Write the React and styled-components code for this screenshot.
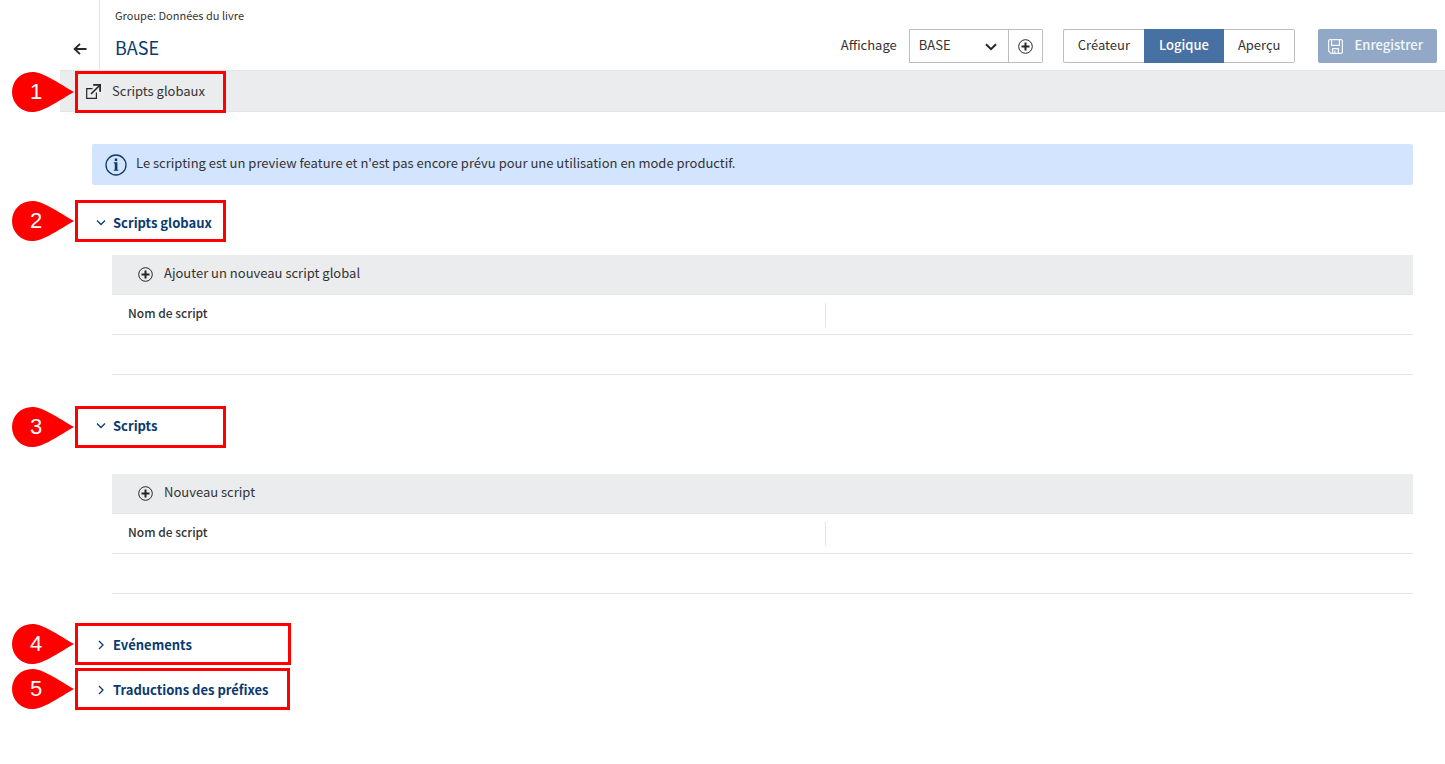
import {useState} from 'react';

import styled, {createGlobalStyle} from 'styled-components';

const GlobalStyle = createGlobalStyle`
  * {
    box-sizing: border-box;
  }

  body {
    margin: 0;
    background: #ffffff;
    color: #333333;
    font-family: "Noto Sans CJK SC", "Noto Sans", sans-serif;
    font-size: 13px;
    line-height: 20px;
  }

  button, select {
    font: inherit;
    color: inherit;
  }

  svg {
    display: block;
    flex: none;
  }
`;

const Page = styled.div`
  padding-left: 60px;
`;

const Header = styled.header`
  display: flex;
  align-items: stretch;
  height: 70px;
  padding-right: 8px;
`;

const BackButton = styled.button`
  display: flex;
  align-items: flex-end;
  justify-content: center;
  width: 40px;
  padding: 0 0 14px;
  border: 0;
  border-right: 1px solid #e4e5e6;
  background: none;
`;

const Heading = styled.div`
  flex: 1;
  padding: 5px 15px 0;
`;

const Group = styled.div`
  font-size: 11px;
`;

const Title = styled.h1`
  margin: 8px 0 0;
  color: #0a3a6e;
  font-size: 18px;
  font-weight: 400;
  line-height: 28px;
`;

const Actions = styled.div`
  display: flex;
  align-items: flex-start;
  padding-top: 29px;
`;

const ViewLabel = styled.label`
  padding: 6px 12px 0 0;
`;

const SelectBox = styled.div`
  display: grid;
  align-items: center;
  width: 100px;
  height: 34px;
  border: 1px solid #bdbdbd;

  > * {
    grid-area: 1 / 1;
  }

  > svg {
    justify-self: end;
    margin: 2px 11px 0 0;
    pointer-events: none;
  }
`;

const Select = styled.select`
  width: 100%;
  height: 32px;
  padding: 0 30px 2px 9px;
  border: 0;
  background: none;
  appearance: none;
`;

const AddView = styled.button`
  display: flex;
  align-items: center;
  justify-content: center;
  width: 34px;
  height: 34px;
  padding: 0;
  border: 1px solid #bdbdbd;
  border-left: 0;
  border-radius: 0 2px 2px 0;
  background: none;
`;

const ModeSwitch = styled.div`
  display: flex;
  margin: 0 23px 0 20px;
`;

const Mode = styled.button`
  height: 34px;
  padding: 0 14px 2px;
  border: 1px solid ${props => props.$active ? '#4771a3' : '#bdbdbd'};
  background: ${props => props.$active ? '#4771a3' : '#ffffff'};
  color: ${props => props.$active ? '#ffffff' : '#333333'};
  font-weight: ${props => props.$active ? 500 : 400};

  &:first-child {
    border-right: 0;
    border-radius: 2px 0 0 2px;
  }

  &:last-child {
    border-left: 0;
    border-radius: 0 2px 2px 0;
  }
`;

const SaveButton = styled.button`
  display: flex;
  align-items: center;
  gap: 11px;
  height: 34px;
  padding: 0 14px 0 10px;
  border: 0;
  border-radius: 2px;
  background: #91a9c7;
  color: #f4f7fa;
  font-weight: 500;
`;

const Toolbar = styled.div`
  position: relative;
  height: 42px;
  border: 1px solid #e4e5e6;
  border-width: 1px 0;
  background: #ebecee;
`;

const ToolbarButton = styled.button`
  display: flex;
  align-items: center;
  gap: 11px;
  height: 40px;
  padding: 0 20px 0 26px;
  border: 0;
  background: none;
`;

const Content = styled.main`
  padding: 32px 32px 54px;
`;

const Notice = styled.div`
  display: flex;
  align-items: center;
  gap: 9px;
  height: 41px;
  margin-bottom: 18px;
  padding: 0 13px;
  border-radius: 2px;
  background: #d3e5fe;
`;

// lifts the text a little above the middle of the icon beside it
const RaisedText = styled.span`
  padding-bottom: 3px;
`;

const SectionBlock = styled.section`
  margin-bottom: ${props => props.$open ? 31 : 5}px;
`;

const SectionTitle = styled.h2`
  position: relative;
  margin: 0;
  font-size: 13px;
  line-height: 20px;
`;

const SectionToggle = styled.button`
  display: flex;
  align-items: center;
  gap: 7px;
  height: 40px;
  padding: 0 4px;
  border: 0;
  background: none;
  color: #0a3a6e;
  font-weight: 700;
`;

const Panel = styled.div`
  margin: ${props => props.$gap}px 0 0 20px;
`;

const PanelBar = styled.div`
  display: flex;
  height: 40px;
  border-bottom: 1px solid #e4e5e6;
  background: #ebecee;
`;

const AddButton = styled.button`
  display: flex;
  align-items: center;
  gap: 11px;
  padding: 0 26px;
  border: 0;
  background: none;
`;

const Table = styled.table`
  width: 100%;
  border-collapse: separate;
  border-spacing: 0;
  table-layout: fixed;
  font-size: 12px;

  th, td {
    height: 40px;
    padding: 0 0 0 16px;
    border-bottom: 1px solid #e4e5e6;
    font-weight: 500;
    text-align: left;
  }

  th:first-child {
    width: 54.8%;
    padding-bottom: 3px;
  }

  th:last-child {
    padding: 0;
  }
`;

const ColumnDivider = styled.div`
  height: 24px;
  border-left: 1px solid #e4e5e6;
`;

const Frame = styled.div`
  position: absolute;
  top: ${props => props.$top}px;
  left: ${props => props.$left}px;
  width: ${props => props.$width}px;
  height: 42px;
  border: 3px solid #ff0000;
  pointer-events: none;
`;

const Pin = styled.div`
  position: absolute;
  top: -2px;
  left: -66px;
  display: grid;

  > * {
    grid-area: 1 / 1;
  }
`;

const PinNumber = styled.span`
  width: 48px;
  color: #ffffff;
  font: 22px/40px "Liberation Sans", sans-serif;
  text-align: center;
`;

const Callout = ({number, top, left, width}) => (
  <Frame $top={top} $left={left} $width={width}>
    <Pin>
      <svg width="62" height="40" fill="#ff0000">
        <path d="M20 0C30 0 40 7 62 20C40 33 30 40 20 40A20 20 0 0 1 20 0Z"/>
      </svg>
      <PinNumber>{number}</PinNumber>
    </Pin>
  </Frame>
);

const BackIcon = () => (
  <svg width="14" height="14" fill="none" stroke="#262626" strokeWidth="1.8">
    <path d="M13.5 7H1.5M7 1.8L1.6 7L7 12.2"/>
  </svg>
);

const PlusIcon = () => (
  <svg width="15" height="15" fill="none" stroke="#262626">
    <circle cx="7.5" cy="7.5" r="6.8"/>
    <path d="M7.5 3.5V11.5M3.5 7.5H11.5" strokeWidth="2"/>
  </svg>
);

const SelectArrow = () => (
  <svg width="12" height="8" fill="none" stroke="#262626" strokeWidth="2">
    <path d="M1 1.2L6 6.2L11 1.2"/>
  </svg>
);

const OpenIcon = () => (
  <svg width="15" height="15" fill="none" stroke="#262626" strokeWidth="1.2">
    <path d="M6.5 4.6H0.7V14.3H10.4V8.5"/>
    <path d="M5 10L13.5 1.5" strokeWidth="1.6"/>
    <path d="M7.2 0H15V7.8H13.2V1.8H7.2Z" fill="#262626" stroke="none"/>
  </svg>
);

const SaveIcon = () => (
  <svg width="15" height="15" fill="none" stroke="#f4f7fa" strokeWidth="1.2">
    <path d="M1.6 0.6H13.4L14.4 1.6V13.4L13.4 14.4H3L0.6 12V1.6Z"/>
    <path d="M3.6 0.6V6.4H11.4V0.6M4.6 14.4V9.6H10.4V14.4M6.8 11.5V14"/>
  </svg>
);

const InfoIcon = () => (
  <svg width="22" height="22" fill="#0a3a6e">
    <circle cx="11" cy="11" r="10" fill="none" stroke="#0a3a6e" strokeWidth="1.3"/>
    <path d="M9.8 4.6H12.2V6.9H9.8ZM8.8 8.3H12.4V15.7H13.4V16.8H8.8V15.7H9.8V9.4H8.8Z"/>
  </svg>
);

const ToggleIcon = ({open}) => (
  <svg width="10" height="10" fill="none" stroke="#0a3a6e" strokeWidth="1.3">
    <path d={open ? 'M1 2.5L5 6.5L9 2.5' : 'M3 1L7 5L3 9'}/>
  </svg>
);

const ScriptPanel = ({gap, addLabel}) => (
  <Panel $gap={gap}>
    <PanelBar>
      <AddButton type="button"><PlusIcon/><RaisedText>{addLabel}</RaisedText></AddButton>
    </PanelBar>
    <Table>
      <thead>
        <tr>
          <th scope="col">Nom de script</th>
          <th><ColumnDivider/></th>
        </tr>
      </thead>
      <tbody>
        <tr>
          <td/>
          <td/>
        </tr>
      </tbody>
    </Table>
  </Panel>
);

const Section = ({title, callout, initiallyOpen = false, children}) => {
  const [open, setOpen] = useState(initiallyOpen);

  return (
    <SectionBlock $open={open}>
      <SectionTitle>
        <SectionToggle type="button" aria-expanded={open} onClick={() => setOpen(!open)}>
          <ToggleIcon open={open}/>
          {title}
        </SectionToggle>
        <Callout left={-17} {...callout}/>
      </SectionTitle>
      {open && children}
    </SectionBlock>
  );
};

const MODES = ['Créateur', 'Logique', 'Aperçu'];

const App = () => {
  const [mode, setMode] = useState('Logique');

  return (
    <Page>
      <GlobalStyle/>
      <Header>
        <BackButton type="button" aria-label="Retour"><BackIcon/></BackButton>
        <Heading>
          <Group>Groupe: Données du livre</Group>
          <Title>BASE</Title>
        </Heading>
        <Actions>
          <ViewLabel htmlFor="view">Affichage</ViewLabel>
          <SelectBox>
            <Select id="view">
              <option>BASE</option>
            </Select>
            <SelectArrow/>
          </SelectBox>
          <AddView type="button" aria-label="Ajouter un affichage"><PlusIcon/></AddView>
          <ModeSwitch>
            {MODES.map(name => (
              <Mode key={name} type="button" $active={name === mode} onClick={() => setMode(name)}>
                {name}
              </Mode>
            ))}
          </ModeSwitch>
          <SaveButton type="button"><SaveIcon/><RaisedText>Enregistrer</RaisedText></SaveButton>
        </Actions>
      </Header>
      <Toolbar>
        <ToolbarButton type="button"><OpenIcon/>Scripts globaux</ToolbarButton>
        <Callout number={1} top={0} left={15} width={151}/>
      </Toolbar>
      <Content>
        <Notice>
          <InfoIcon/>
          <RaisedText>Le scripting est un preview feature et n'est pas encore prévu pour une utilisation en mode productif.</RaisedText>
        </Notice>
        <Section title="Scripts globaux" callout={{number: 2, top: -3, width: 151}} initiallyOpen>
          <ScriptPanel gap={12} addLabel="Ajouter un nouveau script global"/>
        </Section>
        <Section title="Scripts" callout={{number: 3, top: 0, width: 151}} initiallyOpen>
          <ScriptPanel gap={28} addLabel="Nouveau script"/>
        </Section>
        <Section title="Evénements" callout={{number: 4, top: -2, width: 216}}/>
        <Section title="Traductions des préfixes" callout={{number: 5, top: -2, width: 215}}/>
      </Content>
    </Page>
  );
}

export default App;
